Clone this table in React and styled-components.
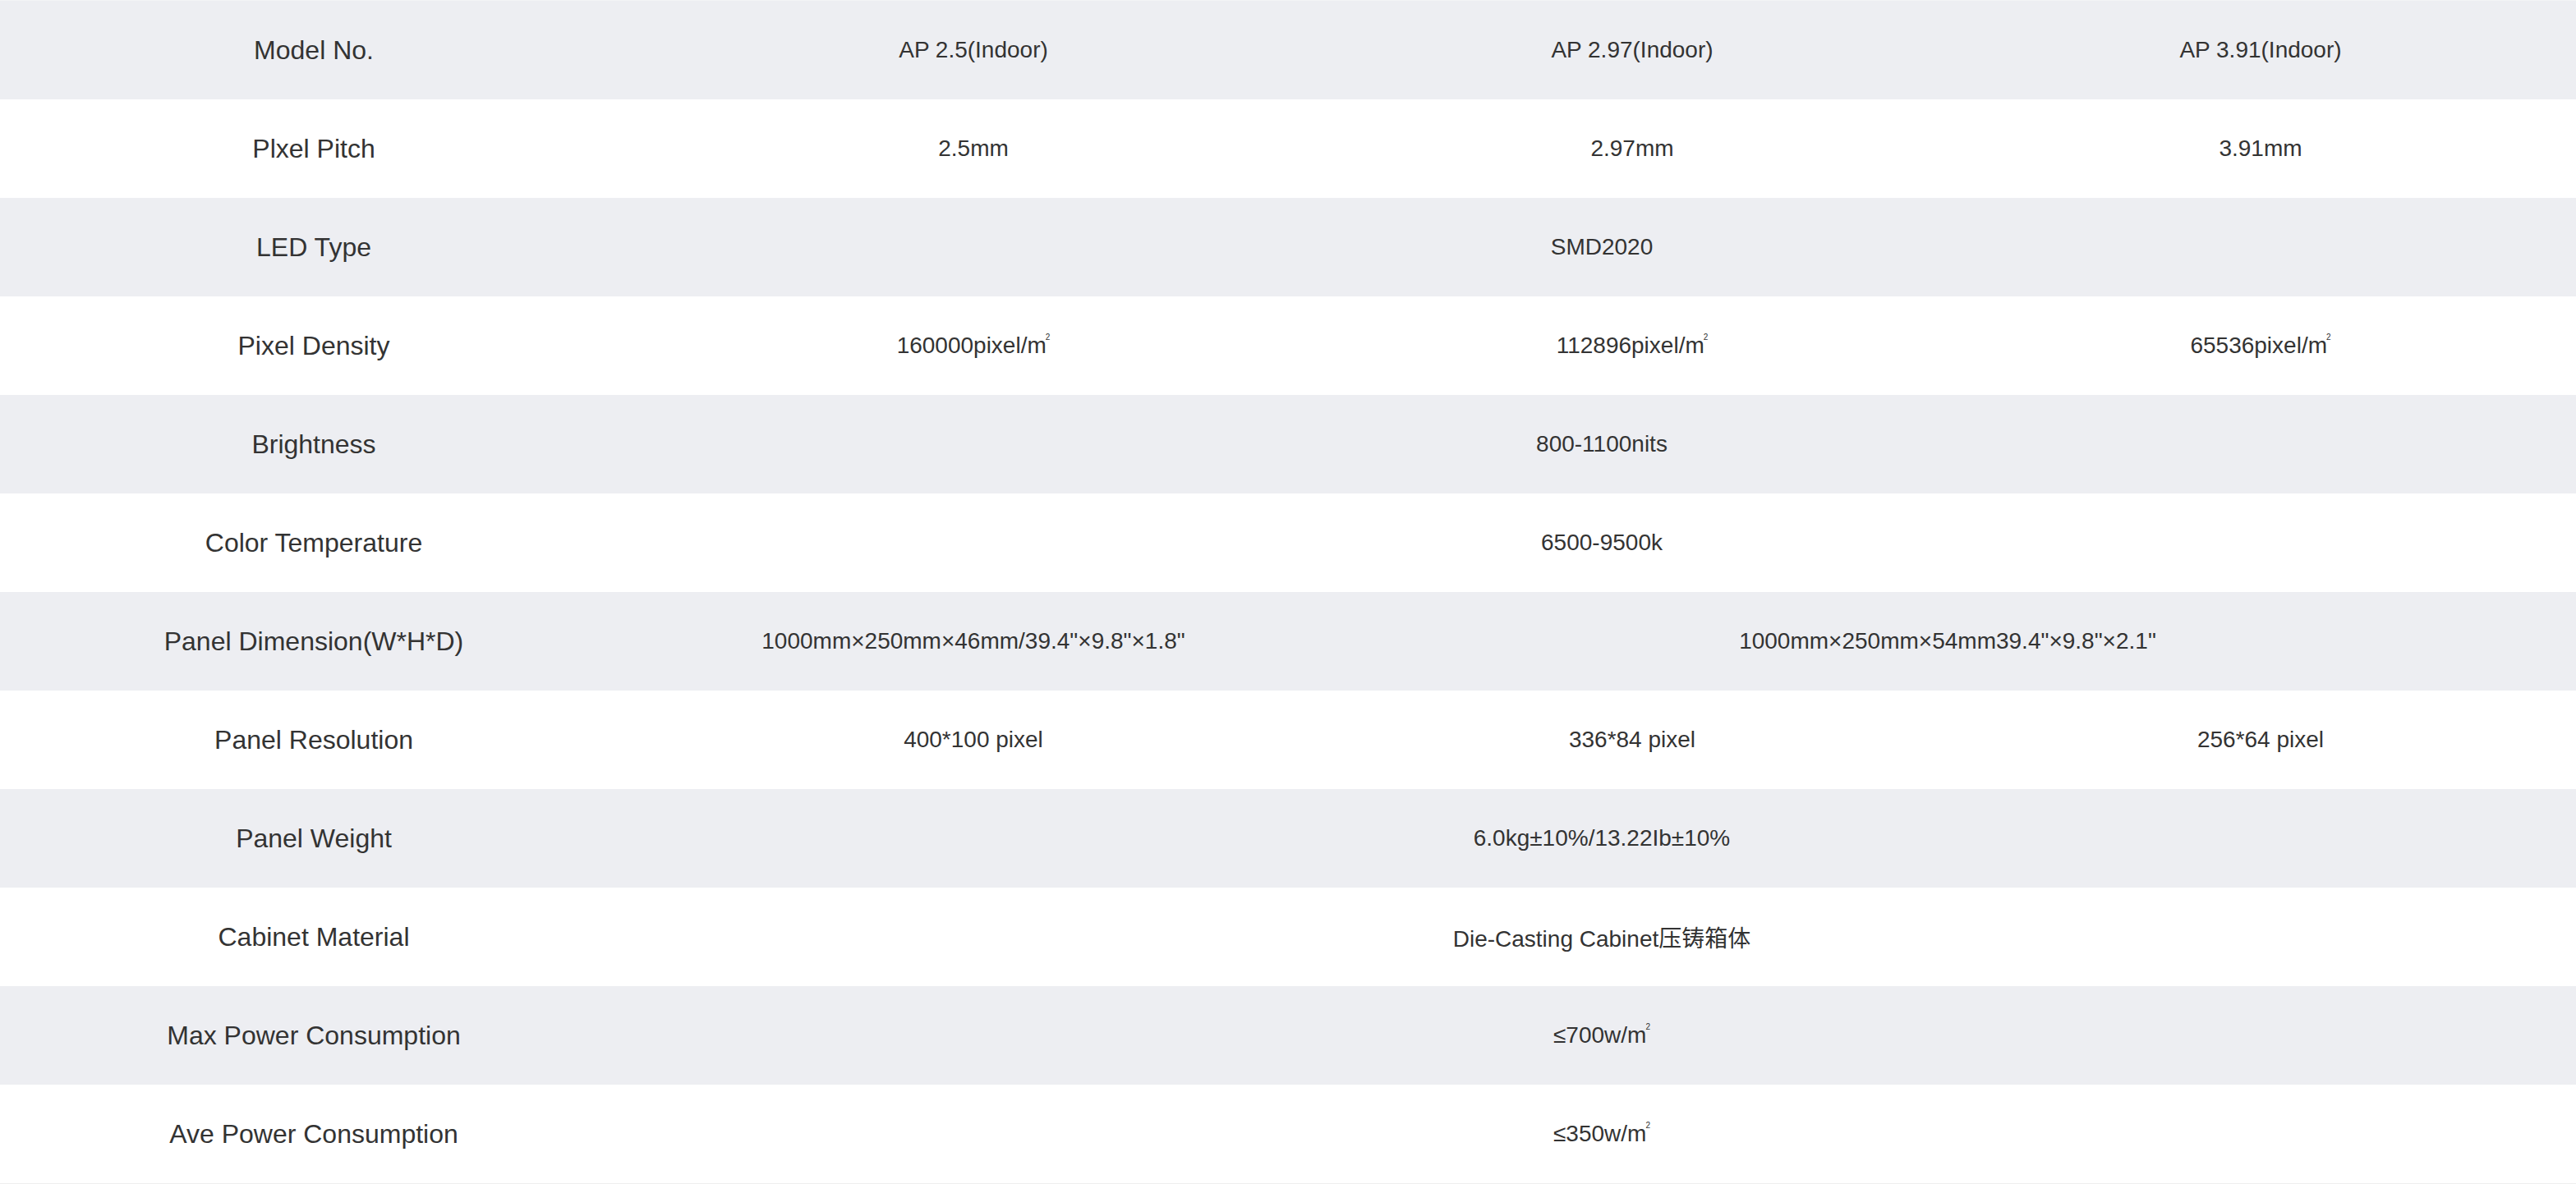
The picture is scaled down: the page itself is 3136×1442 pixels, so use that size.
import React from "react";
import styled, { createGlobalStyle } from "styled-components";

const GlobalStyle = createGlobalStyle`
  html, body {
    margin: 0;
    padding: 0;
    background: #ffffff;
  }
  body {
    font-family: "Liberation Sans", Arial, "Noto Sans CJK SC", sans-serif;
    color: #333333;
  }
`;

const Wrapper = styled.div`
  width: 100%;
  border-top: 1px solid #f3f4f6;
  border-bottom: 1px solid #eeeeee;
`;

const Table = styled.table`
  width: 100%;
  border-collapse: collapse;
  table-layout: fixed;
`;

const Row = styled.tr`
  height: 120px;
  background: ${(p) => (p.$shade ? "#edeef2" : "#ffffff")};
`;

const Label = styled.th`
  padding: 0;
  font-size: 32px;
  font-weight: 400;
  color: #333333;
  text-align: center;
  vertical-align: middle;
  white-space: nowrap;
`;

const Cell = styled.td`
  padding: 0;
  font-size: 28px;
  color: #333333;
  text-align: center;
  vertical-align: middle;
  white-space: nowrap;
`;

const Sup = styled.sup`
  font-size: 10px;
  vertical-align: 16px;
  line-height: 0;
  margin-left: -1px;
`;

const sqm = (
  <>
    m<Sup>2</Sup>
  </>
);

// each value: [text, colSpan]
const specs = [
  ["Model No.", [["AP 2.5(Indoor)", 1], ["AP 2.97(Indoor)", 1], ["AP 3.91(Indoor)", 1]]],
  ["Plxel Pitch", [["2.5mm", 1], ["2.97mm", 1], ["3.91mm", 1]]],
  ["LED Type", [["SMD2020", 3]]],
  [
    "Pixel Density",
    [
      [<>160000pixel/{sqm}</>, 1],
      [<>112896pixel/{sqm}</>, 1],
      [<>65536pixel/{sqm}</>, 1],
    ],
  ],
  ["Brightness", [["800-1100nits", 3]]],
  ["Color Temperature", [["6500-9500k", 3]]],
  [
    "Panel Dimension(W*H*D)",
    [
      ['1000mm×250mm×46mm/39.4"×9.8"×1.8"', 1],
      ['1000mm×250mm×54mm39.4"×9.8"×2.1"', 2],
    ],
  ],
  ["Panel Resolution", [["400*100 pixel", 1], ["336*84 pixel", 1], ["256*64 pixel", 1]]],
  ["Panel Weight", [["6.0kg±10%/13.22Ib±10%", 3]]],
  ["Cabinet Material", [["Die-Casting Cabinet压铸箱体", 3]]],
  ["Max Power Consumption", [[<>≤700w/{sqm}</>, 3]]],
  ["Ave Power Consumption", [[<>≤350w/{sqm}</>, 3]]],
];

export default function App() {
  return (
    <>
      <GlobalStyle />
      <Wrapper>
        <Table>
          <colgroup>
            <col style={{ width: 764 }} />
            <col style={{ width: 842 }} />
            <col style={{ width: 762 }} />
            <col />
          </colgroup>
          <tbody>
            {specs.map(([label, values], i) => (
              <Row key={label} $shade={i % 2 === 0}>
                <Label>{label}</Label>
                {values.map(([v, span], j) => (
                  <Cell key={j} colSpan={span}>
                    {v}
                  </Cell>
                ))}
              </Row>
            ))}
          </tbody>
        </Table>
      </Wrapper>
    </>
  );
}
